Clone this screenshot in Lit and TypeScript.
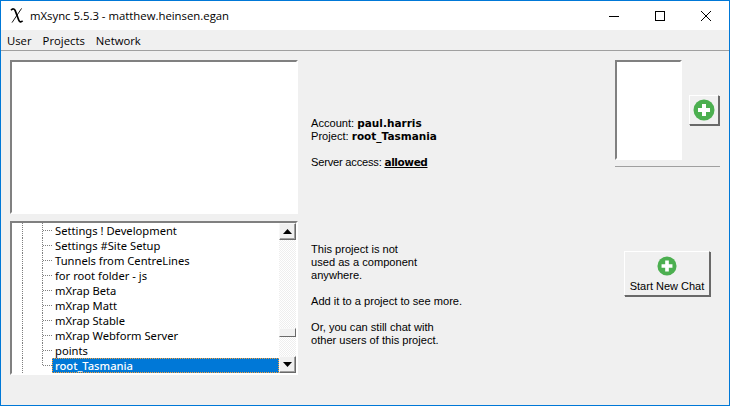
import { LitElement, html, css, svg } from "lit";
import { customElement } from "lit/decorators.js";

const items = [
  "Settings ! Development",
  "Settings #Site Setup",
  "Tunnels from CentreLines",
  "for root folder - js",
  "mXrap Beta",
  "mXrap Matt",
  "mXrap Stable",
  "mXrap Webform Server",
  "points",
  "root_Tasmania",
];

const plus = (size: number) => html`<svg width=${size} height=${size} viewBox="0 0 22 22">
  ${svg`<circle cx="11" cy="11" r="10.5" fill="#4caf50"/>
  <path d="M9 5h4v4h4v4h-4v4H9v-4H5V9h4z" fill="#fff"/>`}
</svg>`;

@customElement("app-root")
export class AppRoot extends LitElement {
  static styles = css`
    :host {
      display: flex;
      flex-direction: column;
      box-sizing: border-box;
      width: 730px;
      height: 406px;
      border: 1px solid #0078d7;
      background: #f0f0f0;
      font-family: "Liberation Sans", sans-serif;
      font-size: 11.1px;
      color: #000;
      overflow: hidden;
    }
    .title {
      height: 29px;
      flex: none;
      display: flex;
      align-items: center;
      background: #fff;
      font-family: "Open Sans", sans-serif;
      font-size: 11.35px;
    }
    .chi {
      width: 29px;
      flex: none;
      padding-left: 9px;
      box-sizing: border-box;
      display: flex;
    }
    .name { flex: 1; }
    .winbtn {
      width: 46px;
      height: 29px;
      display: flex;
      align-items: center;
      justify-content: center;
    }
    .menu {
      height: 20px;
      flex: none;
      display: flex;
      align-items: center;
      gap: 11px;
      padding-left: 6px;
      font-family: "Open Sans", sans-serif;
      font-size: 11.3px;
      border-bottom: 1px solid #a0a0a0;
    }
    .body {
      flex: 1;
      display: grid;
      grid-template-columns: 288px 317px 105px;
      grid-template-rows: 154px 154px;
      row-gap: 7px;
      padding: 9px 0 0 9px;
      align-content: start;
    }
    .sunken {
      box-sizing: border-box;
      background: #fff;
      border: 2px solid;
      border-color: #808080 #fff #fff #808080;
    }
    .info {
      padding: 57px 0 0 13px;
    }
    .line {
      height: 13px;
      line-height: 13px;
      white-space: nowrap;
    }
    .gap { margin-top: 13px; }
    .tight { letter-spacing: -0.2px; }
    .info b {
      font-family: "DejaVu Sans", sans-serif;
      font-size: 10.5px;
      font-weight: bold;
      letter-spacing: 0;
    }
    .info u {
      letter-spacing: -0.4px;
    }
    .note {
      padding: 22px 0 0 13px;
    }
    .side { display: flex; flex-direction: column; }
    .side-top {
      display: flex;
      align-items: center;
      gap: 7px;
      height: 100px;
      padding-bottom: 6px;
      border-bottom: 1px solid #a0a0a0;
      width: 105px;
    }
    .thumb { width: 67px; height: 100px; }
    .btn {
      box-sizing: border-box;
      background: #f0f0f0;
      border: 1px solid;
      border-color: #fff #696969 #696969 #fff;
      box-shadow: 1px 1px 0 #696969;
      display: flex;
      flex-direction: column;
      align-items: center;
      justify-content: center;
    }
    .add { width: 30px; height: 30px; }
    .chat-wrap { padding: 30px 0 0 9px; }
    .chat {
      width: 86px;
      height: 45px;
      gap: 4px;
      white-space: nowrap;
      font-size: 11px;
    }
    .tree {
      display: flex;
      overflow: hidden;
    }
    .rows {
      width: 267px;
      flex: none;
      font-family: "Noto Sans", sans-serif;
      font-size: 11.2px;
    }
    .row {
      height: 15px;
      display: flex;
      align-items: center;
      white-space: nowrap;
      overflow: hidden;
    }
    .guide {
      width: 1px;
      align-self: stretch;
      flex: none;
      background: repeating-linear-gradient(#808080 0 1px, transparent 1px 2px);
    }
    .g1 { margin-left: 10px; }
    .g2 { margin-left: 19px; }
    .last .g2 { align-self: flex-start; height: 8px; }
    .dash {
      width: 9px;
      height: 1px;
      flex: none;
      background: repeating-linear-gradient(90deg, #808080 0 1px, transparent 1px 2px);
    }
    .label {
      padding: 0 3px;
      height: 15px;
      line-height: 15px;
      flex: 0 0 auto;
      box-sizing: border-box;
    }
    .last .label {
      flex: 1;
      background: #0078d7;
      color: #fff;
      outline: 1px dotted #f7a13c;
      outline-offset: -1px;
      font-weight: 500;
    }
    .bar {
      width: 17px;
      flex: none;
      display: flex;
      flex-direction: column;
      background: repeating-conic-gradient(#fff 0 25%, #eeeeee 0 50%) 0 0 / 2px 2px;
    }
    .arrow {
      width: 17px;
      height: 17px;
      flex: none;
      box-sizing: border-box;
      background: #f0f0f0;
      border: 1px solid;
      border-color: #f8f8f8 #696969 #696969 #f8f8f8;
      box-shadow: inset -1px -1px 0 #a0a0a0;
      display: flex;
      align-items: center;
      justify-content: center;
    }
    .spacer1 { height: 88px; flex: none; }
    .knob {
      height: 9px;
      flex: none;
      box-sizing: border-box;
      background: #f0f0f0;
      border: 1px solid;
      border-color: #f8f8f8 #696969 #696969 #f8f8f8;
    }
    .spacer2 { flex: 1; }
  `;

  render() {
    return html`
      <div class="title">
        <span class="chi"><svg width="14" height="17" viewBox="0 0 14 17">${svg`
          <path d="M1 3.2C2.6 1.4 4.4 1.6 5.2 3.6L8.8 13.2C9.6 15.2 11 15.6 12.6 13.8" fill="none" stroke="#000" stroke-width="1.7"/>
          <path d="M11.6 1.4L2 15.6" fill="none" stroke="#000" stroke-width="0.9"/>
        `}</svg></span>
        <span class="name">mXsync 5.5.3 - matthew.heinsen.egan</span>
        <span class="winbtn"><svg width="10" height="10">${svg`<path d="M0 5.5h10" stroke="#000"/>`}</svg></span>
        <span class="winbtn"><svg width="10" height="10">${svg`<rect x=".5" y=".5" width="9" height="9" fill="none" stroke="#000"/>`}</svg></span>
        <span class="winbtn"><svg width="10" height="10">${svg`<path d="M0 0l10 10M10 0L0 10" stroke="#000" stroke-width="1"/>`}</svg></span>
      </div>
      <div class="menu"><span>User</span><span>Projects</span><span>Network</span></div>
      <div class="body">
        <div class="sunken"></div>
        <div class="info">
          <div class="line">Account: <b>paul.harris</b></div>
          <div class="line">Project: <b>root_Tasmania</b></div>
          <div class="line gap tight">Server access: <b><u>allowed</u></b></div>
        </div>
        <div class="side">
          <div class="side-top">
            <div class="sunken thumb"></div>
            <div class="btn add">${plus(22)}</div>
          </div>
        </div>
        <div class="sunken tree">
          <div class="rows">
            ${items.map(
              (t, i) => html`<div class="row ${i === items.length - 1 ? "last" : ""}">
                <i class="guide g1"></i><i class="guide g2"></i><i class="dash"></i>
                <span class="label">${t}</span>
              </div>`
            )}
          </div>
          <div class="bar">
            <div class="arrow"><svg width="9" height="5">${svg`<path d="M4.5 0L9 5H0z"/>`}</svg></div>
            <div class="spacer1"></div>
            <div class="knob"></div>
            <div class="spacer2"></div>
            <div class="arrow"><svg width="9" height="5">${svg`<path d="M0 0h9L4.5 5z"/>`}</svg></div>
          </div>
        </div>
        <div class="note">
          <div class="line">This project is not</div>
          <div class="line">used as a component</div>
          <div class="line">anywhere.</div>
          <div class="line gap">Add it to a project to see more.</div>
          <div class="line gap">Or, you can still chat with</div>
          <div class="line">other users of this project.</div>
        </div>
        <div class="chat-wrap">
          <div class="btn chat">${plus(20)}<span>Start New Chat</span></div>
        </div>
      </div>
    `;
  }
}
